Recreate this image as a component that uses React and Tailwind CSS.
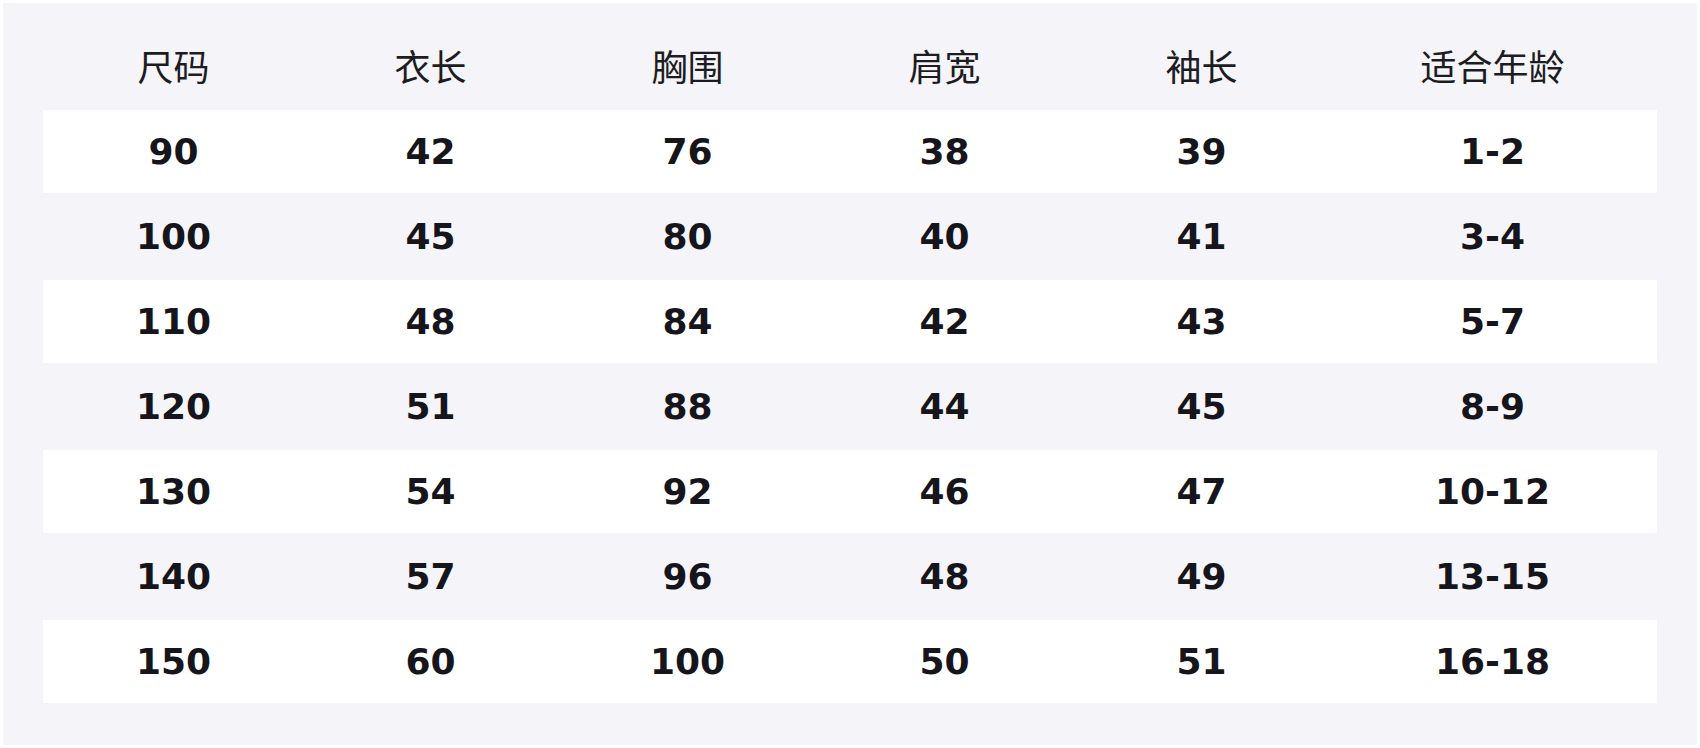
import React from 'react';

const headers = ['尺码', '衣长', '胸围', '肩宽', '袖长', '适合年龄'];

const rows = [
  ['90', '42', '76', '38', '39', '1-2'],
  ['100', '45', '80', '40', '41', '3-4'],
  ['110', '48', '84', '42', '43', '5-7'],
  ['120', '51', '88', '44', '45', '8-9'],
  ['130', '54', '92', '46', '47', '10-12'],
  ['140', '57', '96', '48', '49', '13-15'],
  ['150', '60', '100', '50', '51', '16-18'],
];

const cols = 'grid grid-cols-[257px_257px_257px_257px_257px_1fr]';

const App = () => {
  return (
    <div
      className="w-full h-[748px] bg-white p-[3px]"
      style={{ fontFamily: '"DejaVu Sans", "Noto Sans CJK SC", sans-serif' }}
    >
      <div className="h-full bg-[#f4f4f9] px-[40px] pt-[40px]">
        {/* header */}
        <div className={`${cols} h-[67px] pb-[23px] items-center`}>
          {headers.map((h, j) => (
            <div
              key={h}
              className={`text-center text-[36px] leading-none text-[#1c1c22] ${j < 5 ? 'pl-[4px]' : ''}`}
              style={{ fontFamily: '"Noto Sans CJK SC", sans-serif' }}
            >
              {h}
            </div>
          ))}
        </div>

        {/* body rows */}
        {rows.map((r, i) => (
          <div
            key={r[0]}
            className={`${cols} items-center ${
              i % 2 === 0 ? 'h-[83px] bg-white' : 'h-[87px]'
            }`}
          >
            {r.map((c, j) => (
              <div
                key={j}
                className={`text-center text-[36px] font-bold leading-none text-[#15151b] ${j < 5 ? 'pl-[4px]' : ''}`}
              >
                {c}
              </div>
            ))}
          </div>
        ))}
      </div>
    </div>
  );
};

export default App;
